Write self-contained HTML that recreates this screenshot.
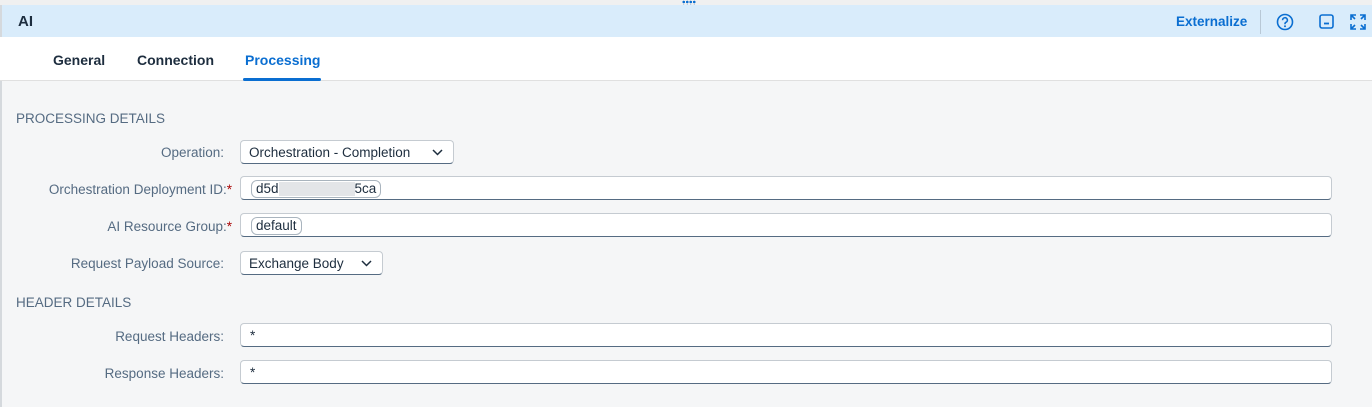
<!DOCTYPE html>
<html><head><style>
body{margin:0;width:1372px;height:407px;background:#f5f6f7;font-family:"Liberation Sans",sans-serif;position:relative;overflow:hidden;color:#32363a}
.abs{position:absolute}
.top{left:0;top:0;width:1372px;height:5px;background:#f0f0f0;border-bottom:1px solid #d9d9d9}
.bar{left:0;top:5px;width:1372px;height:32px;background:#d9ecfb}
.tabs{left:0;top:37px;width:1372px;height:43px;background:#fff;border-bottom:1px solid #e0e0e0}
.tab{top:52px;font-size:14px;font-weight:bold;color:#1d2d3e}
.lbl{font-size:13.5px;color:#556b82;text-align:right;width:224px;left:0}
.inp{background:#fff;border:1px solid #c5cbd1;border-bottom-color:#556b82;border-radius:4px;height:24px;box-sizing:border-box;font-size:13.5px;color:#1d2d3e}
.tok{border:1px solid #a9b4be;border-radius:6px;padding:0 4px;font-size:13.5px;position:absolute;top:3px;left:10px;height:16px;line-height:16px}
.sec{left:16px;font-size:13.5px;color:#556b82}
.req{color:#aa0808}
.chev{position:absolute;right:10px;top:8px}
</style></head><body>
<div class="abs top"></div>
<div class="abs" style="left:682px;top:0;width:14px;height:8px;background:radial-gradient(circle,#0a6ed1 1.2px,transparent 1.4px) 0 0/3.5px 4px"></div>
<div class="abs bar"></div>
<div class="abs" style="left:0;top:5px;width:2px;height:402px;background:#d5d9dd"></div>
<div class="abs" style="left:18px;top:13px;font-size:15px;font-weight:bold;color:#1d2d3e">AI</div>
<div class="abs" style="left:1176px;top:14px;font-size:13.5px;font-weight:bold;color:#0a6ed1">Externalize</div>
<div class="abs" style="left:1260px;top:10px;width:1px;height:24px;background:#b8c8d6"></div>
<svg class="abs" style="left:1276px;top:13px" width="18" height="18" viewBox="0 0 18 18"><circle cx="9" cy="9" r="7.5" fill="none" stroke="#0a6ed1" stroke-width="1.6"/><path d="M6.6 7.2a2.4 2.4 0 1 1 3.2 2.2c-.6.3-.8.7-.8 1.3v.5" fill="none" stroke="#0a6ed1" stroke-width="1.6"/><circle cx="9" cy="13.3" r="1" fill="#0a6ed1"/></svg>
<svg class="abs" style="left:1319px;top:14px" width="16" height="16" viewBox="0 0 16 16"><rect x="1" y="1" width="13" height="13" rx="2" fill="none" stroke="#0a6ed1" stroke-width="1.6"/><path d="M5 9.5h5" stroke="#0a6ed1" stroke-width="1.8"/></svg>
<svg class="abs" style="left:1349px;top:13px" width="18" height="18" viewBox="0 0 18 18" fill="none" stroke="#0a6ed1" stroke-width="1.6"><path d="M2 7V2h5M11 2h5v5M16 11v5h-5M7 16H2v-5M2 2l4 4M16 2l-4 4M16 16l-4-4M2 16l4-4"/></svg>
<div class="abs tabs"></div>
<div class="abs tab" style="left:53px">General</div>
<div class="abs tab" style="left:137px">Connection</div>
<div class="abs tab" style="left:245px;color:#0a6ed1">Processing</div>
<div class="abs" style="left:243px;top:78px;width:78px;height:3px;background:#0a6ed1;border-radius:2px"></div>
<div class="abs sec" style="top:111px">PROCESSING DETAILS</div>
<div class="abs lbl" style="top:145px">Operation:</div>
<div class="abs inp" style="left:240px;top:140px;width:214px;padding:4px 8px">Orchestration - Completion<svg class="chev" width="11" height="7" viewBox="0 0 11 7"><path d="M1 1l4.5 4.5L10 1" fill="none" stroke="#1d2d3e" stroke-width="1.5"/></svg></div>
<div class="abs lbl" style="top:182px;width:232px">Orchestration Deployment ID:<span class="req">*</span></div>
<div class="abs inp" style="left:240px;top:176px;width:1092px"><span class="tok">d5d<span style="display:inline-block;width:76px;height:14px;background:#e3e5e8;vertical-align:middle"></span>5ca</span></div>
<div class="abs lbl" style="top:219px;width:232px">AI Resource Group:<span class="req">*</span></div>
<div class="abs inp" style="left:240px;top:213px;width:1092px"><span class="tok">default</span></div>
<div class="abs lbl" style="top:256px">Request Payload Source:</div>
<div class="abs inp" style="left:240px;top:251px;width:143px;padding:4px 8px">Exchange Body<svg class="chev" width="11" height="7" viewBox="0 0 11 7"><path d="M1 1l4.5 4.5L10 1" fill="none" stroke="#1d2d3e" stroke-width="1.5"/></svg></div>
<div class="abs sec" style="top:295px">HEADER DETAILS</div>
<div class="abs lbl" style="top:329px">Request Headers:</div>
<div class="abs inp" style="left:240px;top:323px;width:1092px;padding:4px 9px">*</div>
<div class="abs lbl" style="top:366px">Response Headers:</div>
<div class="abs inp" style="left:240px;top:360px;width:1092px;padding:4px 9px">*</div>
</body></html>
